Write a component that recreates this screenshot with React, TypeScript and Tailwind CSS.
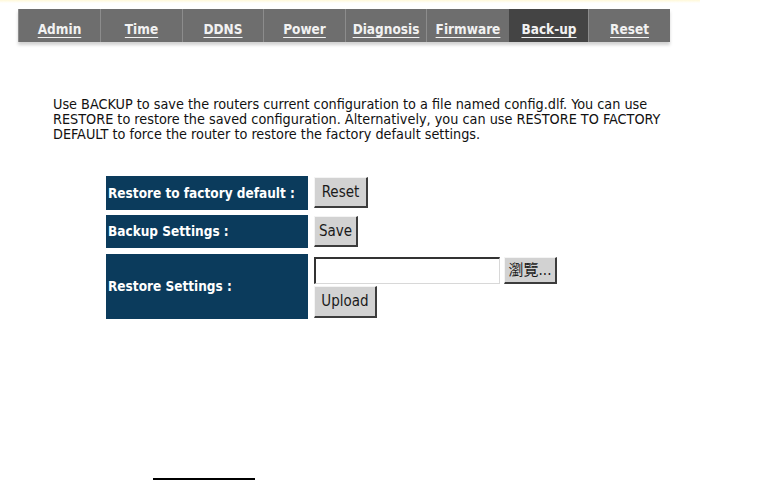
import React from "react";

const tabs = [
  { label: "Admin", w: 82 },
  { label: "Time", w: 82 },
  { label: "DDNS", w: 81 },
  { label: "Power", w: 82 },
  { label: "Diagnosis", w: 81 },
  { label: "Firmware", w: 83 },
  { label: "Back-up", w: 79, active: true },
  { label: "Reset", w: 82 },
];

const condensed = "font-['DejaVu_Sans_Condensed','DejaVu_Sans',sans-serif]";

function Btn({ children, className = "" }: { children: React.ReactNode; className?: string }) {
  return (
    <button
      type="button"
      className={`bg-[#d2d2d2] border border-t-[#f4f4f4] border-l-[#f4f4f4] border-r-[#3c3c3c] border-b-[#3c3c3c] border-r-2 border-b-2 text-[#1a1a1a] text-[15px] leading-none flex items-center justify-center ${className}`}
    >
      {children}
    </button>
  );
}

function Label({ children, h }: { children: React.ReactNode; h: string }) {
  return (
    <div className={`w-[202px] ${h} bg-[#0b3b5c] text-white font-bold text-[13.5px] whitespace-nowrap flex items-center pl-[2px] ${condensed}`}>
      {children}
    </div>
  );
}

export default function App() {
  return (
    <div className="w-[771px] h-[481px] bg-white relative overflow-hidden font-['Liberation_Sans',sans-serif]">
      <div className="h-[3px] w-[700px] bg-gradient-to-b from-[#fff8d8] to-white" />

      <div className="ml-[18px] mt-[6px] flex h-[33px] w-[652px] bg-[#6e6e6e] shadow-[0_3px_3px_rgba(0,0,0,0.18)]">
        {tabs.map(t => (
          <div
            key={t.label}
            style={{ width: t.w }}
            className={`h-full flex items-center justify-center pt-[7px] border-l border-[#8c8c8c] ${t.active ? "bg-[#444444] border-[#444444]" : ""}`}
          >
            <a className={`text-[#f2f2f2] font-bold text-[13.5px] underline underline-offset-[3px] decoration-1 cursor-pointer ${condensed}`}>
              {t.label}
            </a>
          </div>
        ))}
      </div>

      <p className={`ml-[53px] mt-[55px] text-[14.3px] leading-[15px] text-[#111] whitespace-nowrap ${condensed}`}>
        Use BACKUP to save the routers current configuration to a file named config.dlf. You can use
        <br />
        RESTORE to restore the saved configuration. Alternatively, you can use RESTORE TO FACTORY
        <br />
        DEFAULT to force the router to restore the factory default settings.
      </p>

      <div className="ml-[106px] mt-[34px] flex flex-col gap-[5px]">
        <div className="flex gap-[6px]">
          <Label h="h-[34px]">Restore to factory default :</Label>
          <div className="pt-px">
            <Btn className={`w-[54px] h-[31px] ${condensed}`}>Reset</Btn>
          </div>
        </div>
        <div className="flex gap-[6px]">
          <Label h="h-[33px]">Backup Settings :</Label>
          <div className="pt-px">
            <Btn className={`w-[44px] h-[31px] ${condensed}`}>Save</Btn>
          </div>
        </div>
        <div className="flex gap-[6px] mt-px">
          <Label h="h-[65px]">Restore Settings :</Label>
          <div className="flex flex-col gap-[2px] pt-[3px]">
            <div className="flex gap-[4px] items-center">
              <input
                type="text"
                className="w-[186px] h-[27px] bg-white border border-t-2 border-l-2 border-t-[#333] border-l-[#333] border-r-[#d8d8d8] border-b-[#d8d8d8] outline-none"
              />
              <Btn className="w-[53px] h-[27px] text-[14px] font-['DejaVu_Sans_Condensed','Noto_Sans_CJK_TC',sans-serif]">瀏覽...</Btn>
            </div>
            <Btn className={`w-[63px] h-[32px] ${condensed}`}>Upload</Btn>
          </div>
        </div>
      </div>

      <div className="ml-[153px] mt-[159px] w-[102px] h-[2px] bg-black" />
    </div>
  );
}
